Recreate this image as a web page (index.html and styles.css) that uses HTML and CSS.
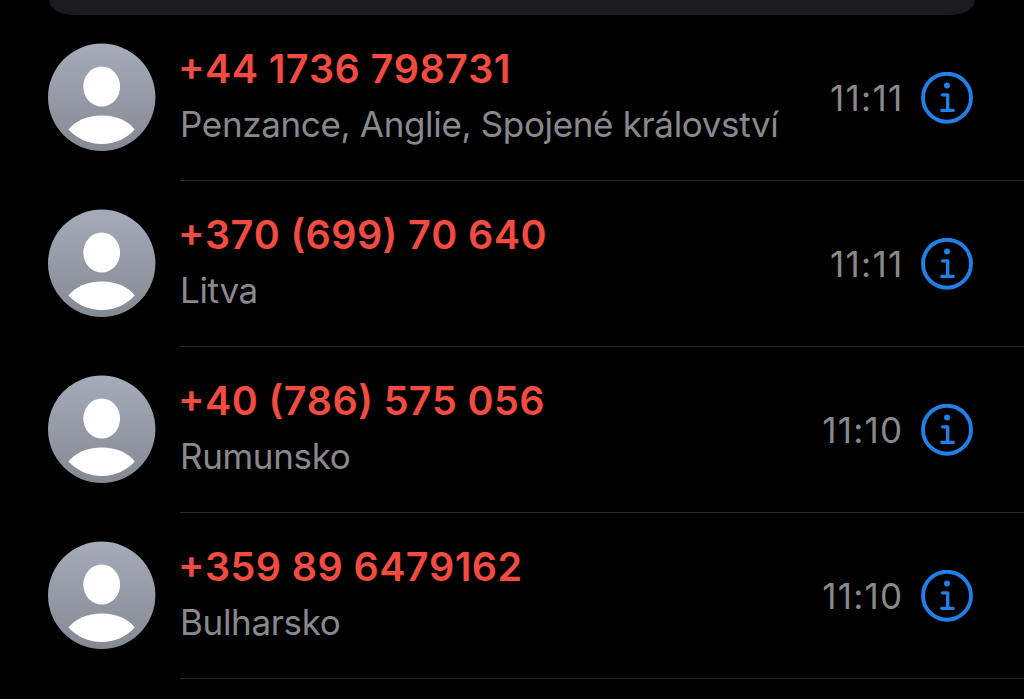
FILE: index.html
```
<!DOCTYPE html>
<html lang="cs">
<head>
  <meta charset="UTF-8">
  <meta name="viewport" content="width=device-width, initial-scale=1.0">
  <title>Hovory</title>
  <link rel="stylesheet" href="styles.css">
</head>
<body>
  <!-- Shared icons -->
  <svg class="icon-defs" width="0" height="0">
    <defs>
      <linearGradient id="avatar-bg" x1="0" y1="0" x2="0" y2="1">
        <stop offset="0" stop-color="#a5abb9"/>
        <stop offset="1" stop-color="#858993"/>
      </linearGradient>
    </defs>
    <symbol id="avatar" viewBox="0 0 108 108">
      <circle cx="53.7" cy="54.3" r="53.7" fill="url(#avatar-bg)"/>
      <ellipse cx="53.7" cy="43.6" rx="18.4" ry="20" fill="#fff"/>
      <path d="M20.5 86.4C27 78 39 72.4 53.7 72.4S80.7 78 86.7 86.4C78.7 95.4 66.7 101 53.7 101S28.7 95.4 20.5 86.4Z" fill="#fff"/>
    </symbol>
    <symbol id="info" viewBox="0 0 52 52">
      <g fill="none" stroke="#1f80e8" stroke-linecap="round" stroke-linejoin="round">
        <circle cx="26" cy="25.7" r="24" stroke-width="3.9"/>
        <path d="M21.5 22.8H26.7V38.3M20.7 38.3H32.3" stroke-width="3.3"/>
      </g>
      <circle cx="26" cy="13.6" r="3" fill="#1f80e8"/>
    </symbol>
  </svg>

  <div class="search-bar"></div>

  <div class="call-list">
    <div class="call">
      <svg class="avatar"><use href="#avatar"/></svg>
      <div class="call-body">
        <div class="caller">
          <div class="number">+44 1736 798731</div>
          <div class="place">Penzance, Anglie, Spojené království</div>
        </div>
        <div class="time">11:11</div>
        <svg class="info"><use href="#info"/></svg>
      </div>
    </div>
    <div class="call">
      <svg class="avatar"><use href="#avatar"/></svg>
      <div class="call-body">
        <div class="caller">
          <div class="number">+370 (699) 70 640</div>
          <div class="place">Litva</div>
        </div>
        <div class="time">11:11</div>
        <svg class="info"><use href="#info"/></svg>
      </div>
    </div>
    <div class="call">
      <svg class="avatar"><use href="#avatar"/></svg>
      <div class="call-body">
        <div class="caller">
          <div class="number">+40 (786) 575 056</div>
          <div class="place">Rumunsko</div>
        </div>
        <div class="time">11:10</div>
        <svg class="info"><use href="#info"/></svg>
      </div>
    </div>
    <div class="call">
      <svg class="avatar"><use href="#avatar"/></svg>
      <div class="call-body">
        <div class="caller">
          <div class="number">+359 89 6479162</div>
          <div class="place">Bulharsko</div>
        </div>
        <div class="time">11:10</div>
        <svg class="info"><use href="#info"/></svg>
      </div>
    </div>
  </div>
</body>
</html>
```
FILE: styles.css
```
* {
  box-sizing: border-box;
}

body {
  font-family: Inter, "Liberation Sans", sans-serif;
  background-color: #000;
  margin: 0;
  height: 100vh;
  overflow: hidden;
}

.icon-defs {
  display: block;
}

.search-bar {
  height: 15px;
  margin: 0 49px;
  background-color: #1c1c1e;
  border-radius: 0 0 24px 24px / 0 0 15px 15px;
}

.call {
  display: flex;
  height: 166px;
  padding-left: 48px;
}

.avatar {
  flex: none;
  width: 108px;
  height: 108px;
  margin-top: 28px;
  margin-right: 24px;
}

.call-body {
  flex: 1;
  display: flex;
  align-items: center;
  padding-right: 51px;
  border-bottom: 1px solid #2b2b2d;
}

.caller {
  flex: 1;
  white-space: nowrap;
  padding-bottom: 3px;
}

.number {
  color: #f24b42;
  font-size: 39.5px;
  font-weight: 600;
  line-height: 56px;
  letter-spacing: 0.4px;
  margin-left: -2px;
  font-kerning: none;
  font-feature-settings: "case" 1;
}

.place {
  color: #89898d;
  font-size: 35px;
  line-height: 54px;
  letter-spacing: -0.34px;
}

.time {
  color: #89898d;
  font-size: 35px;
  letter-spacing: 1.3px;
  margin-right: 17.5px;
}

.info {
  flex: none;
  width: 52px;
  height: 52px;
}
```
